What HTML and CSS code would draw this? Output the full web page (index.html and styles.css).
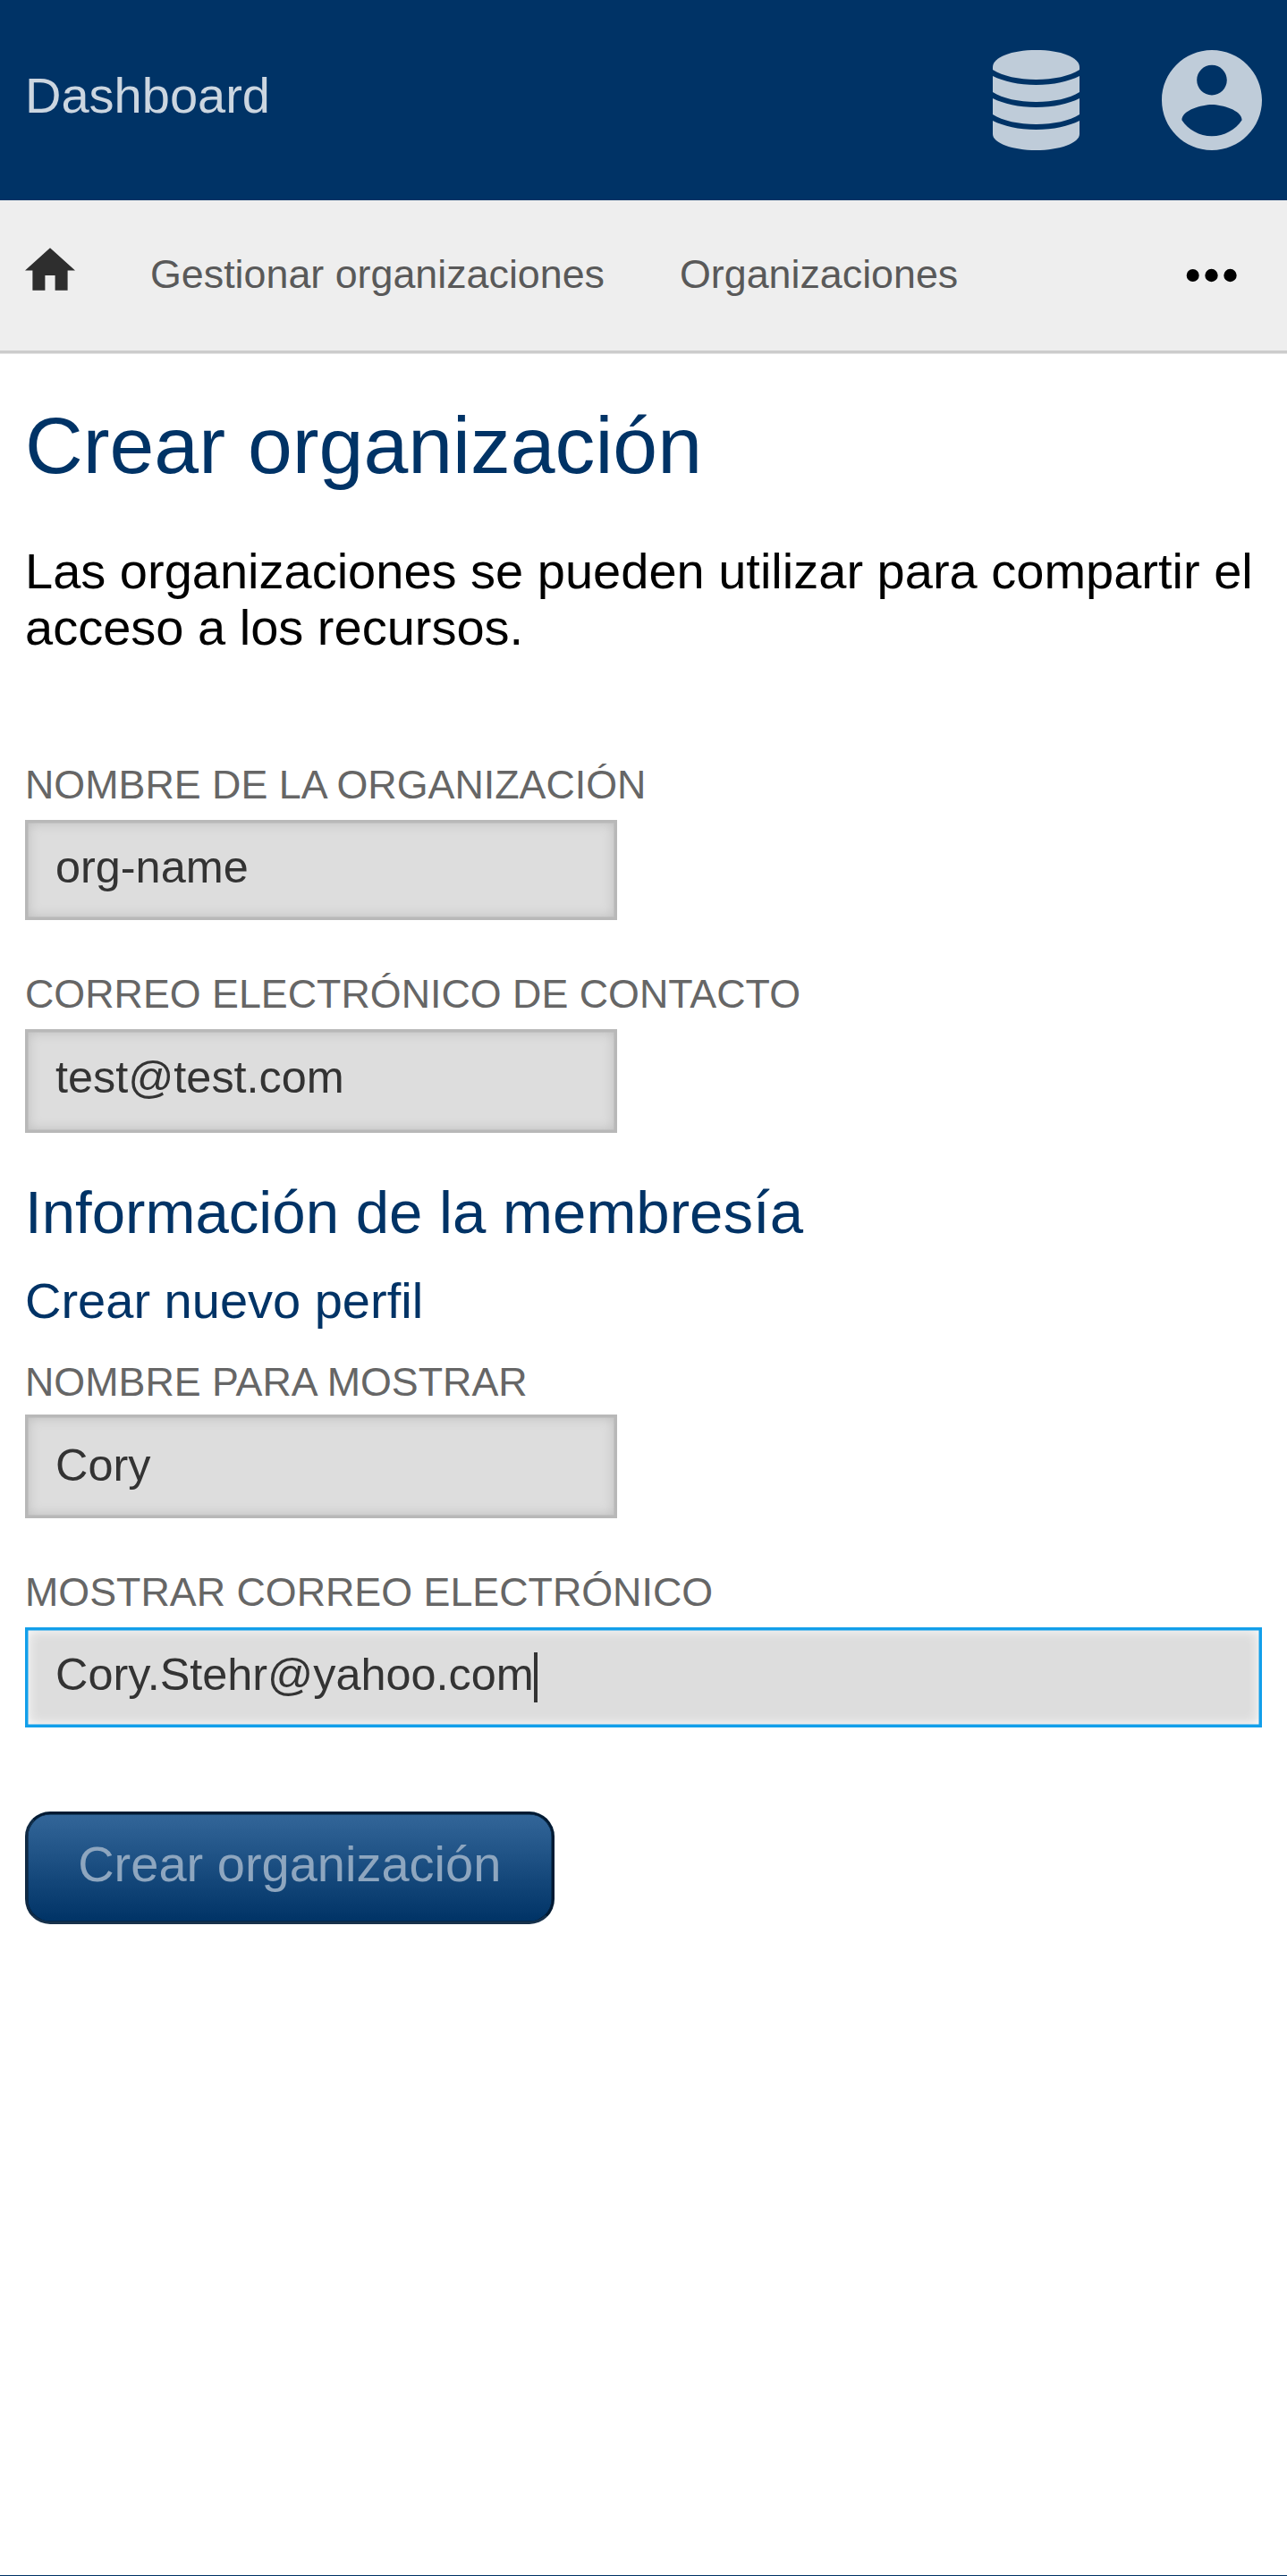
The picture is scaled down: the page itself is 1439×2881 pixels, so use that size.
FILE: index.html
```html
<!DOCTYPE html>
<html lang="es">
<head>
<meta charset="utf-8">
<title>Crear organización</title>
<link rel="stylesheet" href="styles.css">
</head>
<body>
<header class="topbar">
  <a class="brand">Dashboard</a>
  <div class="topbar-icons">
    <svg class="icon-db" viewBox="0 0 97 112">
      <path d="M0 19C0 8 21 0 48.500 0S97 8 97 19V22C86 29 68 33 48.500 33S11 29 0 22Z"/>
      <path d="M0 29C12 35 29 39 48.500 39S85 35 97 29V47C86 54 68 58 48.500 58S11 54 0 47Z"/>
      <path d="M0 54C12 60 29 64 48.500 64S85 60 97 54V72C86 79 68 83 48.500 83S11 79 0 72Z"/>
      <path d="M0 79C12 85 29 89 48.500 89S85 85 97 79V94C97 104 75 112 48.500 112S0 104 0 94Z"/>
    </svg>
    <svg class="icon-user" viewBox="2 2 20 20">
      <path d="M12 2C6.480 2 2 6.480 2 12s4.480 10 10 10 10-4.480 10-10S17.520 2 12 2zm0 3c1.660 0 3 1.340 3 3s-1.340 3-3 3-3-1.340-3-3 1.340-3 3-3zm0 14.200c-2.500 0-4.710-1.280-6-3.220.030-1.990 4-3.080 6-3.080 1.990 0 5.970 1.090 6 3.080-1.290 1.940-3.500 3.220-6 3.220z"/>
    </svg>
  </div>
</header>
<nav class="subnav">
  <svg class="icon-home" viewBox="2 3 20 17"><path d="M10 20v-6h4v6h5v-8h3L12 3 2 12h3v8z"/></svg>
  <a class="nav-link">Gestionar organizaciones</a>
  <a class="nav-link">Organizaciones</a>
  <svg class="icon-more" viewBox="0 0 56 14"><circle cx="6.700" cy="7" r="7"/><circle cx="27.500" cy="7" r="7.200"/><circle cx="48.500" cy="7" r="7.200"/></svg>
</nav>
<main class="content">
  <h1 class="title">Crear organización</h1>
  <p class="intro">Las organizaciones se pueden utilizar para compartir el acceso a los recursos.</p>
  <div class="field field-name">
    <span class="label">NOMBRE DE LA ORGANIZACIÓN</span>
    <div class="input">org-name</div>
  </div>
  <div class="field field-contact">
    <span class="label">CORREO ELECTRÓNICO DE CONTACTO</span>
    <div class="input input-tall">test@test.com</div>
  </div>
  <h2 class="section">Información de la membresía</h2>
  <h3 class="subsection">Crear nuevo perfil</h3>
  <div class="field field-display">
    <span class="label">NOMBRE PARA MOSTRAR</span>
    <div class="input input-tall">Cory</div>
  </div>
  <div class="field field-email">
    <span class="label">MOSTRAR CORREO ELECTRÓNICO</span>
    <div class="input input-focus">Cory.Stehr@yahoo.com<span class="caret"></span></div>
  </div>
  <button class="submit" disabled>Crear organización</button>
</main>
<footer class="footer"></footer>
</body>
</html>
```
FILE: styles.css
```css
* { box-sizing: border-box; }
html, body { margin: 0; }
body {
  display: flex;
  flex-direction: column;
  height: 2881px;
  overflow: hidden;
  background: #fff;
  color: #000;
  font: 56px/63px "Liberation Sans", Arial, sans-serif;
}
h1, h2, h3, p { margin: 0; font-weight: 400; }

.topbar {
  display: flex;
  flex: none;
  justify-content: space-between;
  height: 224px;
  padding: 56px 28px 0;
  background: #003366;
}
.brand { padding-top: 19px; color: #ccd6e0; }
.topbar-icons { display: flex; gap: 92px; fill: #bfccd9; }
.icon-db { width: 97px; height: 112px; }
.icon-user { width: 112px; height: 112px; }

.subnav {
  display: flex;
  flex: none;
  height: 168px;
  padding: 51px 56px 0 28px;
  background: #eee;
  box-shadow: 0 3.5px #ccc;
  font-size: 44.8px;
}
.icon-home { width: 56px; height: 48px; margin-top: 2px; fill: #2e2e2e; }
.nav-link { margin-left: 84px; color: #595959; }
.icon-more { width: 56px; height: 14px; margin: 26px 0 0 auto; fill: #000; overflow: visible; }

.content { flex: 1; padding: 56px 28px 0; }
.title { color: #003366; font-size: 89.6px; line-height: 100px; }
.intro { margin-top: 59px; }

.field { display: flex; flex-direction: column; }
.field-name { margin-top: 119px; }
.field-contact { margin-top: 57px; }
.field-display { margin-top: 34.5px; }
.field-email { margin-top: 57.5px; }
.label { color: #666; font-size: 44.8px; line-height: 50px; }
.input {
  width: 661.5px;
  height: 112px;
  margin-top: 15px;
  padding: 0 31px;
  border: 3px solid #b8b8b8;
  background: #ddd;
  box-shadow: inset 0 0 0 0.5px #b8b8b8, inset 0 0 14px #bbb;
  color: #333;
  font-size: 50.4px;
  line-height: 99px;
}
.input-tall { height: 115.5px; line-height: 101px; }
.field-display .input { margin-top: 12px; line-height: 107px; }
.input-focus {
  display: flex;
  width: 1382.5px;
  border-color: #129fea;
  box-shadow: inset 0 0 0 0.5px #129fea, inset 0 0 14px #fff;
}
.caret { width: 4px; height: 56px; margin: 25px 0 0 0.5px; background: #333; }

.section { margin-top: 51px; color: #003366; font-size: 67.2px; line-height: 76px; }
.subsection { margin-top: 29px; color: #003366; font-size: 56px; }

.submit {
  display: block;
  width: 591.5px;
  height: 126px;
  margin-top: 94px;
  padding: 0 0 10px;
  border: 3px solid;
  border-color: #001a33 #001a33 #17314b #102a44;
  border-radius: 28px;
  background: linear-gradient(#336699, #003366);
  box-shadow: inset 0 0 0 0.5px #001a33;
  color: #8ea6bf;
  font: inherit;
}
.footer { flex: none; height: 1px; background: #003366; }
```
